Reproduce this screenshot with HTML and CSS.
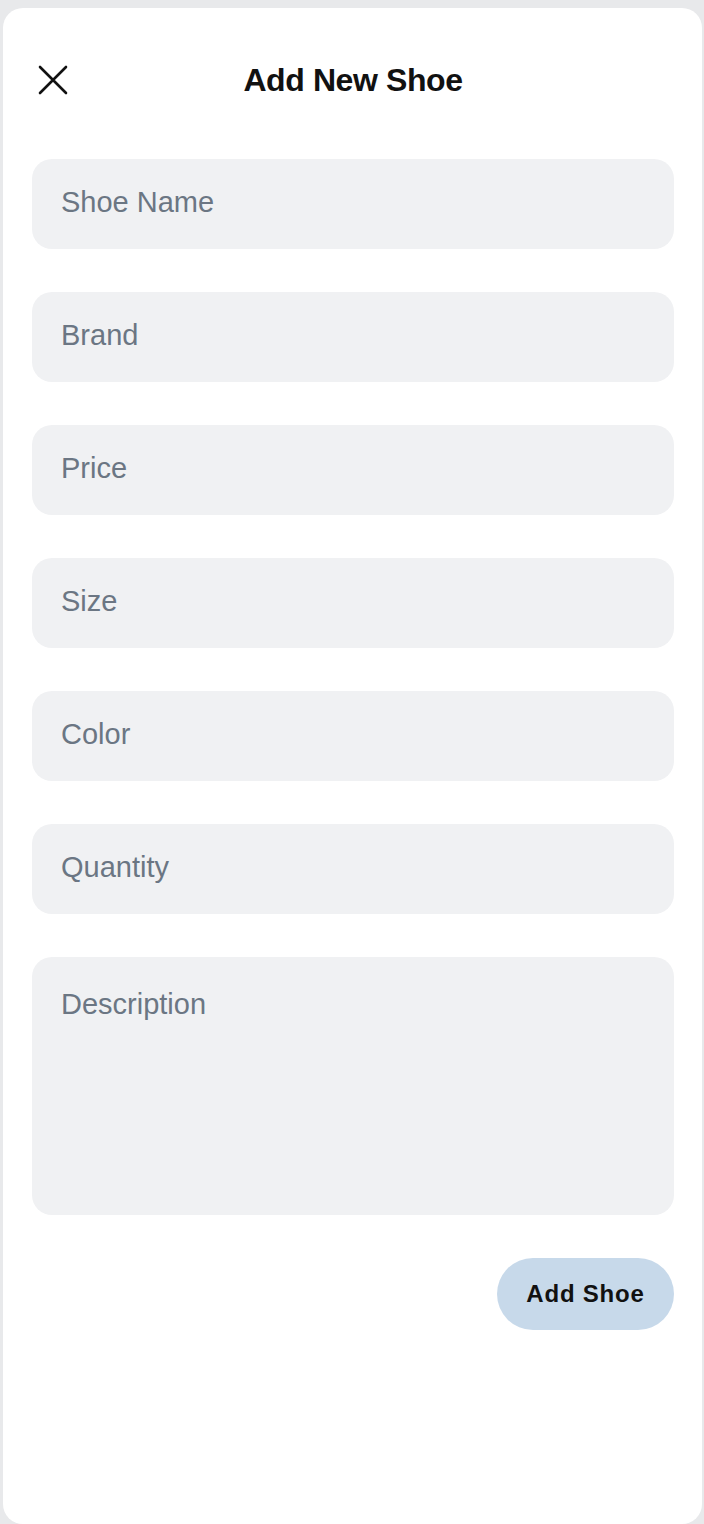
FILE: index.html
```html
<!DOCTYPE html>
<html lang="en">
<head>
<meta charset="utf-8">
<title>Add New Shoe</title>
<link rel="stylesheet" href="styles.css">
</head>
<body>
<div class="sheet">
  <header class="header">
    <button class="close" aria-label="Close">
      <svg width="30" height="30" viewBox="0 0 30 30"><path d="M2 2 L28 28 M28 2 L2 28" stroke="#111" stroke-width="2.6" stroke-linecap="round" fill="none"/></svg>
    </button>
    <h1 class="title">Add New Shoe</h1>
    <span class="spacer"></span>
  </header>
  <form class="fields">
    <input class="field" placeholder="Shoe Name">
    <input class="field" placeholder="Brand">
    <input class="field" placeholder="Price">
    <input class="field" placeholder="Size">
    <input class="field" placeholder="Color">
    <input class="field" placeholder="Quantity">
    <textarea class="field area" placeholder="Description"></textarea>
    <div class="actions">
      <button type="button" class="submit">Add Shoe</button>
    </div>
  </form>
</div>
</body>
</html>
```
FILE: styles.css
```css
* { box-sizing: border-box; }
html, body { margin: 0; padding: 0; }
body {
  background: #e8e9eb;
  font-family: "Liberation Sans", Arial, sans-serif;
  height: 1524px;
  overflow: hidden;
}
.sheet {
  margin: 8px 2px 0 3px;
  height: 1516px;
  background: #fff;
  border-radius: 20px;
  padding: 40px 28px 0 29px;
}
.header {
  display: grid;
  grid-template-columns: 1fr auto 1fr;
  align-items: center;
  height: 64px;
}
.close {
  justify-self: start;
  background: none;
  border: 0;
  padding: 0;
  margin-left: 6px;
  width: 30px;
  height: 30px;
  display: flex;
}
.title {
  margin: 0;
  font-size: 32px;
  font-weight: 700;
  color: #111;
  letter-spacing: -0.4px;
}
.fields {
  margin-top: 47px;
  display: flex;
  flex-direction: column;
  gap: 43px;
}
.field {
  display: block;
  width: 100%;
  height: 90px;
  border: 0;
  border-radius: 20px;
  background: #f0f1f3;
  padding: 0 29px 3px;
  font-family: "Liberation Sans", Arial, sans-serif;
  font-size: 29px;
  color: #111;
  outline: none;
}
.field::placeholder { color: #6b7683; opacity: 1; }
.area {
  height: 258px;
  padding-top: 30px;
  resize: none;
  line-height: 34px;
}
.actions {
  display: flex;
  justify-content: flex-end;
}
.submit {
  width: 177px;
  height: 72px;
  border: 0;
  border-radius: 36px;
  background: #c7d9ea;
  color: #111;
  font-family: "Liberation Sans", Arial, sans-serif;
  font-weight: 700;
  font-size: 24px;
  letter-spacing: 0.8px;
}
```
